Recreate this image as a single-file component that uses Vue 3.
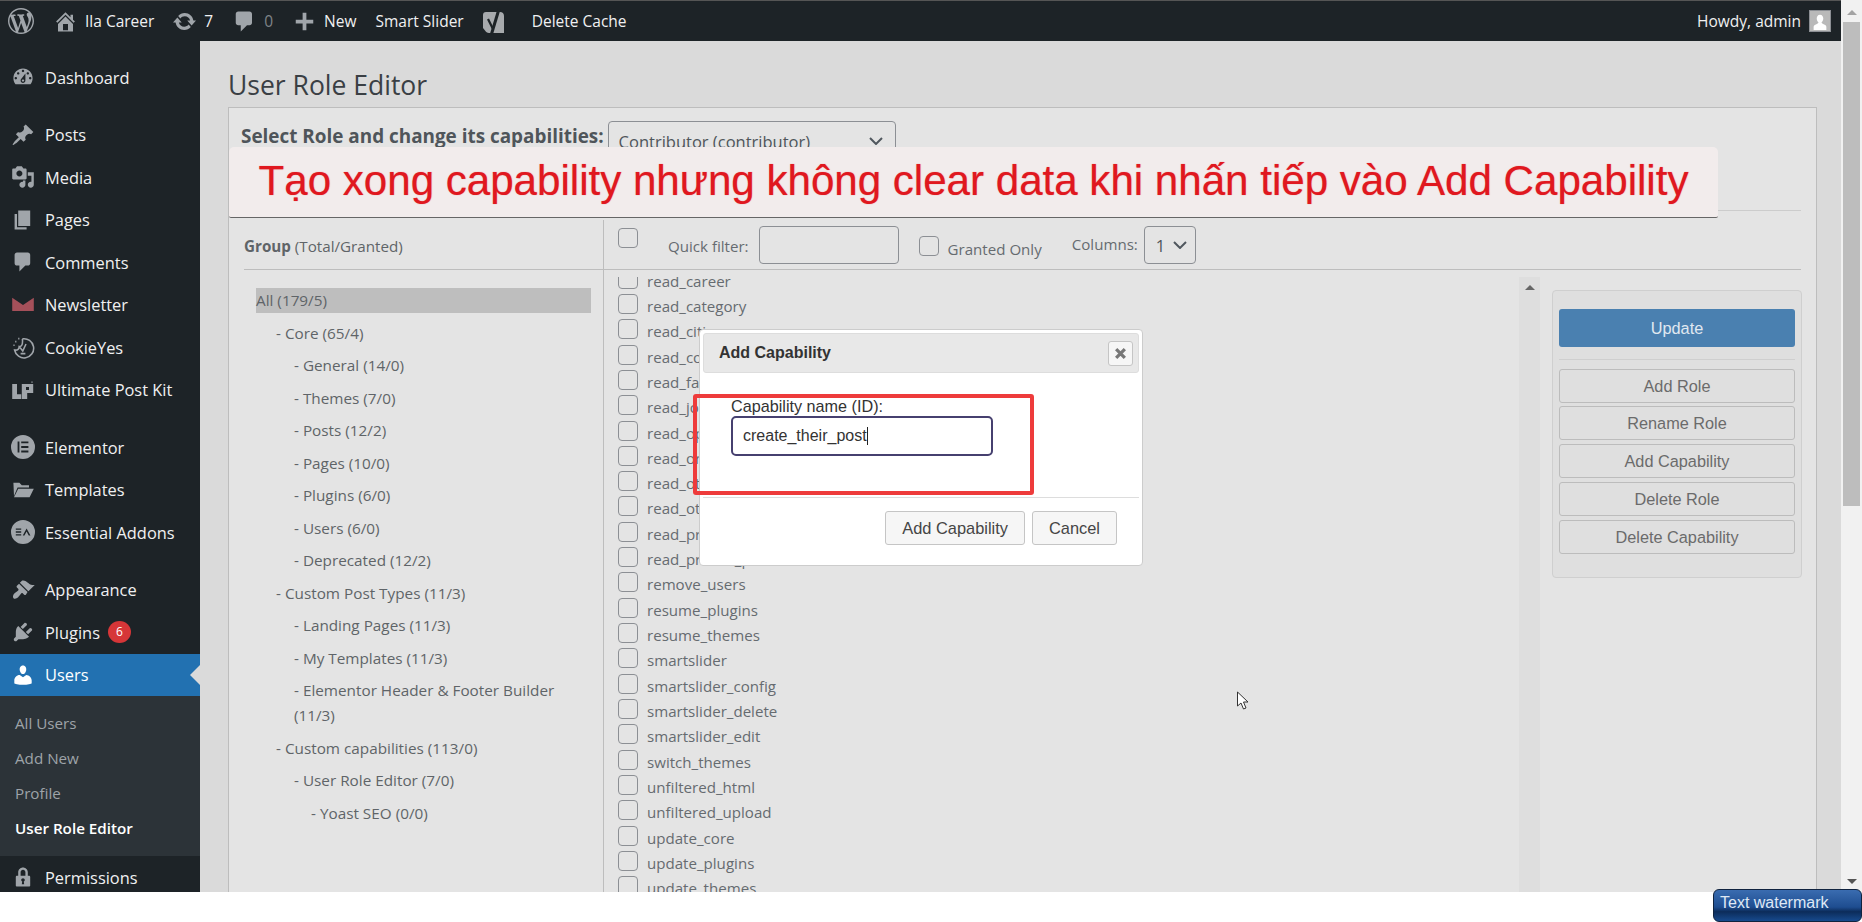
<script setup>
  const wpLogo = 'M20 10c0-5.51-4.49-10-10-10C4.48 0 0 4.49 0 10c0 5.52 4.48 10 10 10 5.51 0 10-4.48 10-10zM7.78 15.37L4.37 6.22c.55-.02 1.17-.08 1.17-.08.5-.06.44-1.13-.06-1.11 0 0-1.45.11-2.37.11-.18 0-.37 0-.58-.01C4.12 2.69 6.87 1.11 10 1.11c2.33 0 4.45.87 6.05 2.34-.68-.11-1.65.39-1.65 1.58 0 .74.45 1.36.9 2.1.35.61.55 1.36.55 2.46 0 1.49-1.4 5-1.4 5l-3.03-8.37c.54-.02.82-.17.82-.17.5-.05.44-1.25-.06-1.22 0 0-1.44.12-2.38.12-.87 0-2.33-.12-2.33-.12-.5-.03-.56 1.2-.06 1.22l.92.08 1.26 3.41zM17.41 10c.24-.64.74-1.87.43-4.25.7 1.29 1.05 2.71 1.05 4.25 0 3.29-1.73 6.24-4.4 7.78.97-2.59 1.94-5.2 2.92-7.78zM6.1 18.09C3.12 16.65 1.11 13.53 1.11 10c0-1.3.23-2.48.72-3.59C3.25 10.3 4.67 14.2 6.1 18.09zm4.03-6.63l2.58 6.98c-.86.29-1.76.45-2.71.45-.79 0-1.57-.11-2.29-.33.81-2.38 1.62-4.74 2.42-7.1z'
  const home = 'M16 8.5l1.53 1.53-1.06 1.06L10 4.62l-6.47 6.47-1.06-1.06L10 2.5l4 4v-2h2v4zm-6-2.46l6 5.99V18H4v-5.97zM12 17v-5H8v5h4z'
  const update = 'M10.2 3.28c3.53 0 6.43 2.61 6.92 6h2.08l-3.5 4-3.5-4h2.32c-.45-1.97-2.21-3.45-4.32-3.45-1.45 0-2.73.71-3.54 1.78L4.95 5.66C6.23 4.2 8.11 3.28 10.2 3.28zm-.4 13.44c-3.52 0-6.43-2.61-6.92-6H.8l3.5-4c1.17 1.33 2.33 2.67 3.5 4H5.48c.45 1.97 2.21 3.45 4.32 3.45 1.45 0 2.73-.71 3.54-1.78l1.71 1.95c-1.28 1.46-3.15 2.38-5.25 2.38z'
  const comment = 'M5 2h9c1.1 0 2 .9 2 2v7c0 1.1-.9 2-2 2h-2l-5 5v-5H5c-1.1 0-2-.9-2-2V4c0-1.1.9-2 2-2z'
  const plus = 'M17 8.5v3h-5.5V17h-3v-5.5H3v-3h5.5V3h3v5.500z'

  const topItems = [
    { icon: home, text: 'Ila Career', cls: 'w-home' },
    { icon: update, text: '7', cls: 'w-update' },
    { icon: comment, text: '0', cls: 'w-comment', dim: true },
    { icon: plus, text: 'New', cls: 'w-new' }
  ]

  // sidebar, sep = extra gap above the item
  const menu = [
    { name: 'Dashboard', icon: 'M3.76 16h12.48c1.1-1.37 1.76-3.11 1.76-5 0-4.42-3.58-8-8-8s-8 3.58-8 8c0 1.89.66 3.63 1.76 5zM10 4c.55 0 1 .45 1 1s-.45 1-1 1-1-.45-1-1 .45-1 1-1zM6 6c.55 0 1 .45 1 1s-.45 1-1 1-1-.45-1-1 .45-1 1-1zm8 0c.55 0 1 .45 1 1s-.45 1-1 1-1-.45-1-1 .45-1 1-1zm-5.37 5.55L12 7v6c0 1.1-.9 2-2 2s-2-.9-2-2c0-.57.24-1.08.63-1.45zM4 10c.55 0 1 .45 1 1s-.45 1-1 1-1-.45-1-1 .45-1 1-1zm12 0c.55 0 1 .45 1 1s-.45 1-1 1-1-.45-1-1 .45-1 1-1zm-5 3c0-.55-.45-1-1-1s-1 .45-1 1 .45 1 1 1 1-.45 1-1z' },
    { name: 'Posts', sep: true, icon: 'M10.44 3.02l1.82-1.82 6.36 6.35-1.83 1.82c-1.05-.68-2.48-.57-3.41.36l-.75.75c-.92.93-1.04 2.35-.35 3.41l-1.83 1.82-2.41-2.41-2.8 2.79c-.42.42-3.38 2.71-3.8 2.29s1.86-3.39 2.28-3.81l2.79-2.79L4.1 9.36l1.83-1.82c1.05.69 2.48.57 3.4-.36l.75-.75c.93-.92 1.05-2.35.36-3.41z' },
    { name: 'Media', icon: 'M13 11V4c0-.55-.45-1-1-1h-1.67L9 1H5L3.67 3H2c-.55 0-1 .45-1 1v7c0 .55.45 1 1 1h10c.55 0 1-.45 1-1zM7 4.5c1.38 0 2.5 1.12 2.5 2.5S8.38 9.5 7 9.5 4.5 8.38 4.5 7 5.62 4.5 7 4.5zM14 6h5v10.5c0 1.38-1.12 2.5-2.5 2.5S14 17.88 14 16.5s1.12-2.5 2.5-2.5c.17 0 .34.02.5.05V9h-3V6zm-4 8.05V13h2v3.5c0 1.38-1.12 2.5-2.5 2.5S7 17.88 7 16.5 8.12 14 9.5 14c.17 0 .34.02.5.05z' },
    { name: 'Pages', icon: 'M6 15V2h10v13H6zm-1 1h8v2H3V5h2v11z' },
    { name: 'Comments', icon: comment },
    { name: 'Newsletter', icon: 'M1 4l9 6 9-6v11H1z', color: '#a5505a' },
    { name: 'CookieYes', stroke: true, icon: 'M9.500 3.200A8 8 0 1 1 3 12.500c2.500.5 4-1 3.800-3 2 .3 3.200-1.300 2.700-6.300M7.500 10.500l2.300 2.800 2.700-5.800M8 15.500h4M3.500 5.500h1M2 8.500h1M6 3h1' },
    { name: 'Ultimate Post Kit', icon: 'M1 5h4v8.500h3.500v4H1zM9 5h9.500v7.500h-5v5H9zM12.500 7.500v2.500h2.500V7.500zM17 3h1v1h-1z' },
    { name: 'Elementor', sep: true, icon: 'M10 0a10 10 0 1 0 0 20A10 10 0 0 0 10 0zM7 14.500H5.500v-9H7zm7.500 0h-6V13h6zm0-3.700h-6V9.200h6zm0-3.900h-6V5.500h6z' },
    { name: 'Templates', icon: 'M2 4h5l2 2h6v2H5.500L2.500 15zM6 9h13l-3.500 7H2.500z' },
    { name: 'Essential Addons', icon: 'M10 0a10 10 0 1 0 0 20A10 10 0 0 0 10 0zM4 7h4.500v1.200H4zm0 2.400h4.500v1.200H4zm0 2.400h4.500V13H4zM13 7l3.200 6h-1.400L13 9.600 11.200 13H9.800z' },
    { name: 'Appearance', sep: true, icon: 'M14.48 11.06L7.41 3.99l1.5-1.5c.5-.56 2.3-.47 3.51.32 1.21.8 1.43 1.28 2.91 2.1 1.18.64 2.45 1.26 4.45.85zm-.71.71L6.7 4.7 4.93 6.47c-.39.39-.39 1.02 0 1.41l1.06 1.06c.39.39.39 1.03 0 1.42-.6.6-1.43 1.11-2.21 1.69-.35.26-.7.53-1.01.84-1.31 1.3-1.4 3.23-.7 3.9.7.7 2.6.6 3.9-.7.31-.31.58-.66.84-1.01.58-.78 1.09-1.61 1.69-2.21.39-.39 1.03-.39 1.42 0l1.06 1.06c.39.39 1.02.39 1.41 0z' },
    { name: 'Plugins', badge: 6, icon: 'M13.11 4.36L9.87 7.6 8 5.73l3.24-3.24c.35-.34 1.05-.2 1.56.32.52.51.66 1.21.31 1.55zm-8 1.77l.91-1.12 9.01 9.01-1.19.84c-.71.71-2.63 1.16-3.82 1.16H6.14L4.9 17.26c-.59.59-1.54.59-2.12 0-.59-.58-.59-1.53 0-2.12l1.24-1.24v-3.88c0-1.13.4-3.19 1.09-3.89zm7.26 3.97l3.24-3.24c.34-.35 1.04-.21 1.55.31.52.51.66 1.21.31 1.55l-3.24 3.25z' },
    { name: 'Users', active: true, icon: 'M10 9.25c-2.27 0-2.73-3.44-2.73-3.44C7 4.02 7.82 2 9.97 2c2.16 0 2.98 2.02 2.71 3.81 0 0-.41 3.44-2.68 3.44zm0 2.57L12.72 10c2.39 0 4.52 2.33 4.52 4.53v2.49s-3.65 1.13-7.24 1.13c-3.65 0-7.24-1.13-7.24-1.13v-2.49c0-2.25 1.94-4.48 4.47-4.48z' },
    { name: 'Permissions', icon: 'M14 9h1c.55 0 1 .45 1 1v7c0 .55-.45 1-1 1H5c-.55 0-1-.45-1-1v-7c0-.55.45-1 1-1h1V6c0-2.21 1.79-4 4-4s4 1.79 4 4v3zm-2 0V6c0-1.1-.9-2-2-2s-2 .9-2 2v3h4zm-1 7l-.36-2.15c.51-.24.86-.75.86-1.35 0-.83-.67-1.5-1.5-1.5s-1.5.67-1.5 1.5c0 .6.35 1.11.86 1.35L9 16h2z' }
  ]

  const submenu = [
    { name: 'All Users' },
    { name: 'Add New' },
    { name: 'Profile' },
    { name: 'User Role Editor', current: true }
  ]

  const groups = [
    { text: 'Core (65/4)', level: 1 },
    { text: 'General (14/0)', level: 2 },
    { text: 'Themes (7/0)', level: 2 },
    { text: 'Posts (12/2)', level: 2 },
    { text: 'Pages (10/0)', level: 2 },
    { text: 'Plugins (6/0)', level: 2 },
    { text: 'Users (6/0)', level: 2 },
    { text: 'Deprecated (12/2)', level: 2 },
    { text: 'Custom Post Types (11/3)', level: 1 },
    { text: 'Landing Pages (11/3)', level: 2 },
    { text: 'My Templates (11/3)', level: 2 },
    { text: 'Elementor Header & Footer Builder (11/3)', level: 2 },
    { text: 'Custom capabilities (113/0)', level: 1 },
    { text: 'User Role Editor (7/0)', level: 2 },
    { text: 'Yoast SEO (0/0)', level: 3 }
  ]

  const caps = [
    'read_career', 'read_category', 'read_cities', 'read_companies', 'read_faqs', 'read_jobs',
    'read_options', 'read_orders', 'read_others', 'read_others_posts', 'read_private_pages', 'read_private_posts',
    'remove_users', 'resume_plugins', 'resume_themes', 'smartslider', 'smartslider_config',
    'smartslider_delete', 'smartslider_edit', 'switch_themes', 'unfiltered_html', 'unfiltered_upload',
    'update_core', 'update_plugins', 'update_themes', 'upload_files'
  ]

  const actions = ['Add Role', 'Rename Role', 'Add Capability', 'Delete Role', 'Delete Capability']
</script>

<template>
  <div class="page">
    <div class="window">
      <div class="viewport">
        <!-- Admin bar -->
        <header class="adminbar">
          <svg class="bar-logo" viewBox="0 0 20 20"><path :d="wpLogo" /></svg>
          <div v-for="item in topItems" :key="item.cls" class="bar-item" :class="item.cls">
            <svg class="bar-icon" viewBox="0 0 20 20"><path :d="item.icon" /></svg>
            <span :class="{ 'bar-dim': item.dim }">{{ item.text }}</span>
          </div>
          <span class="bar-item w-slider">Smart Slider</span>
          <svg class="bar-yoast" viewBox="0 0 24 28">
            <path d="M4 5h14c2.500 0 4 1.500 4 4v17H7c-2 0-3-1-4-2.500L1 21V8c0-2 1-3 3-3z" />
            <path class="yoast-y" d="M6 12l5 10" />
            <path class="yoast-slash" d="M17 2L9.500 27" />
          </svg>
          <span class="bar-item w-cache">Delete Cache</span>
          <div class="bar-right">
            <span>Howdy, admin</span>
            <div class="avatar">
              <svg viewBox="0 0 22 22"><path d="M11 4c2.500 0 3.600 2 3.600 4.200 0 1.800-.9 3.500-1.900 4.300 0 1 .8 1.400 2.300 2 1.700.7 3 1.500 3 3V21H4v-3.500c0-1.500 1.300-2.300 3-3 1.500-.6 2.300-1 2.300-2-1-.8-1.900-2.500-1.900-4.300C7.400 6 8.500 4 11 4z" /></svg>
            </div>
          </div>
        </header>

        <div class="body-row">
          <!-- Sidebar -->
          <nav class="sidebar">
            <template v-for="item in menu" :key="item.name">
              <div class="menu-item" :class="{ 'menu-sep': item.sep, 'menu-active': item.active }">
                <svg
                  class="menu-icon"
                  :class="{ 'menu-icon-line': item.stroke }"
                  viewBox="0 0 20 20"
                  :style="item.color ? { fill: item.color } : null"
                >
                  <path :d="item.icon" />
                </svg>
                <span>{{ item.name }}</span>
                <span v-if="item.badge" class="menu-badge">{{ item.badge }}</span>
                <span v-if="item.active" class="menu-arrow"></span>
              </div>
              <div v-if="item.active" class="submenu">
                <div v-for="sub in submenu" :key="sub.name" class="sub-item" :class="{ 'sub-current': sub.current }">
                  {{ sub.name }}
                </div>
              </div>
            </template>
          </nav>

          <!-- Main content -->
          <main class="content">
            <h1 class="page-title">User Role Editor</h1>
            <section class="panel">
              <div class="role-row">
                <span class="role-label">Select Role and change its capabilities:</span>
                <div class="select role-select">
                  <span>Contributor (contributor)</span>
                  <svg class="chevron" viewBox="0 0 14 8"><path d="M1 1l6 6 6-6" /></svg>
                </div>
              </div>

              <div class="editor">
                <div class="groups">
                  <div class="groups-head"><b>Group</b> (Total/Granted)</div>
                  <div class="groups-list">
                    <div class="group-all">All (179/5)</div>
                    <div v-for="g in groups" :key="g.text" class="group-row" :class="'level-' + g.level">
                      - {{ g.text }}
                    </div>
                  </div>
                </div>

                <div class="caps">
                  <div class="caps-head">
                    <span class="check check-all"></span>
                    <span class="filter-label">Quick filter:</span>
                    <span class="filter-input"></span>
                    <span class="check check-granted"></span>
                    <span class="granted-label">Granted Only</span>
                    <span class="columns-label">Columns:</span>
                    <div class="select columns-select">
                      <span>1</span>
                      <svg class="chevron" viewBox="0 0 14 8"><path d="M1 1l6 6 6-6" /></svg>
                    </div>
                  </div>
                  <div class="caps-body">
                    <div class="caps-list">
                      <div class="caps-inner">
                        <div v-for="c in caps" :key="c" class="cap-row">
                          <span class="check"></span>
                          <span>{{ c }}</span>
                        </div>
                      </div>
                      <div class="caps-scroll"><span class="arrow-up"></span></div>
                    </div>
                    <aside class="actions">
                      <div class="btn-update">Update</div>
                      <div class="actions-sep"></div>
                      <div v-for="a in actions" :key="a" class="btn-action">{{ a }}</div>
                    </aside>
                  </div>
                </div>
              </div>
            </section>
          </main>
        </div>
      </div>

      <!-- Page scrollbar -->
      <div class="scrollbar">
        <span class="arrow-up arrow-light"></span>
        <div class="thumb"></div>
        <span class="arrow-down"></span>
      </div>
    </div>

    <!-- Annotation over the screenshot -->
    <div class="banner">Tạo xong capability nhưng không clear data khi nhấn tiếp vào Add Capability</div>

    <!-- Dialog -->
    <div class="dialog">
      <div class="dialog-title">
        <span>Add Capability</span>
        <div class="dialog-close">
          <svg viewBox="0 0 12 12"><path d="M2 2l8 8M10 2l-8 8" /></svg>
        </div>
      </div>
      <div class="dialog-body">
        <label class="dialog-label">Capability name (ID):</label>
        <div class="dialog-input"><span>create_their_post</span><i class="caret"></i></div>
      </div>
      <div class="dialog-foot">
        <div class="dialog-btn">Add Capability</div>
        <div class="dialog-btn">Cancel</div>
      </div>
      <div class="red-box"></div>
    </div>

    <div class="watermark">Text watermark</div>

    <svg class="cursor" viewBox="0 0 14 20"><path d="M1.500 1v14l3.500-3 2.500 6 2.500-1-2.500-6H12z" /></svg>
  </div>
</template>

<style>
  html, body {
    margin: 0;
    background: #fff;
    overflow: hidden;
  }
</style>

<style scoped>
  .page {
    position: relative;
    width: 1862px;
    height: 922px;
    overflow: hidden;
    background: #fff;
    font-family: "Open Sans", "Noto Sans", sans-serif;
    font-size: 15px;
  }

  .window {
    display: flex;
    height: 892px;
  }

  .viewport {
    flex: 1;
    min-width: 0;
    display: flex;
    flex-direction: column;
  }

  /* admin bar */
  .adminbar {
    flex: none;
    height: 40px;
    margin-top: 1px;
    box-shadow: 0 -1px 0 #555;
    background: #1d2327;
    color: #f0f0f1;
    display: flex;
    align-items: center;
    padding-left: 8px;
    padding-right: 10px;
    font-size: 15.500px;
  }

  .bar-logo {
    width: 26px;
    height: 26px;
    fill: #a0a5aa;
    margin-right: 19px;
  }

  .bar-item {
    display: flex;
    align-items: center;
    white-space: nowrap;
  }

  .bar-icon {
    width: 25px;
    height: 25px;
    fill: #a0a5aa;
    flex: none;
    margin-right: 7px;
  }

  .bar-dim {
    color: #7f8488;
  }

  .w-home { margin-right: 18px; }
  .w-update { margin-right: 19px; }
  .w-comment { margin-right: 19px; }
  .w-new { margin-right: 19px; }
  .w-slider { margin-right: 18px; }
  .w-cache { margin-left: 26px; }

  .bar-yoast {
    width: 24px;
    height: 28px;
    fill: #a7aaad;
  }

  .yoast-y {
    fill: none;
    stroke: #1d2327;
    stroke-width: 2.200;
  }

  .yoast-slash {
    fill: none;
    stroke: #1d2327;
    stroke-width: 3;
  }

  .bar-right {
    margin-left: auto;
    display: flex;
    align-items: center;
    gap: 8px;
  }

  .avatar {
    box-sizing: border-box;
    width: 22px;
    height: 22px;
    background: #b9b9b9;
    border: 1px solid #8c8f94;
  }

  .avatar svg {
    display: block;
    width: 100%;
    height: 100%;
    fill: #fff;
  }

  .body-row {
    flex: 1;
    min-height: 0;
    display: flex;
  }

  /* sidebar */
  .sidebar {
    flex: none;
    width: 200px;
    background: #1d2327;
    padding-top: 15px;
    overflow: hidden;
    color: #f0f0f1;
    font-size: 16.400px;
  }

  .menu-item {
    position: relative;
    height: 42.500px;
    display: flex;
    align-items: center;
    padding-left: 11px;
  }

  .menu-sep {
    margin-top: 15px;
  }

  .menu-active {
    background: #2271b1;
    color: #fff;
  }

  .menu-icon {
    width: 24px;
    height: 24px;
    fill: #a0a5aa;
    flex: none;
    margin-right: 10px;
  }

  .menu-icon-line {
    fill: none;
    stroke: #a0a5aa;
    stroke-width: 1.300;
  }

  .menu-active .menu-icon {
    fill: #fff;
  }

  .menu-badge {
    margin-left: 8px;
    width: 23px;
    height: 22px;
    border-radius: 50%;
    background: #d63638;
    color: #fff;
    font-size: 12px;
    line-height: 22px;
    text-align: center;
  }

  .menu-arrow {
    position: absolute;
    right: 0;
    top: 50%;
    margin-top: -10px;
    border: 10px solid transparent;
    border-right-color: #dadada;
    border-left-width: 0;
  }

  .submenu {
    background: #2c3338;
    padding: 10px 0;
    color: #9ea3a8;
    font-size: 15.200px;
  }

  .sub-item {
    height: 35px;
    line-height: 35px;
    padding-left: 15px;
  }

  .sub-current {
    color: #fff;
    font-weight: 600;
  }

  /* content */
  .content {
    flex: 1;
    min-width: 0;
    background: #dadada;
    padding-left: 28px;
    padding-right: 24px;
    overflow: hidden;
  }

  .page-title {
    margin: 0;
    height: 66px;
    line-height: 88px;
    font-size: 26.500px;
    font-weight: 400;
    color: #3a3f44;
  }

  .panel {
    border: 1px solid #bdbdbd;
    background: #e4e4e4;
    padding: 0 15px;
    height: 900px;
    box-sizing: border-box;
  }

  .role-row {
    height: 103px;
    box-sizing: border-box;
    border-bottom: 1px solid #cccccc;
    margin-left: -3px;
    display: flex;
    align-items: flex-start;
    padding-top: 13px;
    gap: 4px;
  }

  .role-label {
    font-size: 18.900px;
    font-weight: 700;
    line-height: 30px;
    color: #4f555a;
    white-space: nowrap;
  }

  .select {
    box-sizing: border-box;
    border: 1px solid #8c8f94;
    border-radius: 4px;
    display: flex;
    align-items: center;
    justify-content: space-between;
    color: #4f555a;
    font-size: 16.500px;
  }

  .role-select {
    width: 288px;
    height: 40px;
    padding: 0 12px 0 10px;
  }

  .columns-select {
    width: 52px;
    height: 38px;
    padding: 0 8px 0 11px;
  }

  .chevron {
    width: 14px;
    height: 8px;
    fill: none;
    stroke: #50575e;
    stroke-width: 2;
  }

  .editor {
    display: flex;
    margin-top: 9px;
    height: 770px;
  }

  .groups {
    flex: none;
    width: 360px;
    box-sizing: border-box;
    border-right: 1px solid #bdbdbd;
    color: #5f6468;
  }

  .groups-head {
    height: 50px;
    line-height: 52px;
    border-bottom: 1px solid #bdbdbd;
    box-sizing: border-box;
    font-size: 15.200px;
  }

  .groups-list {
    padding-top: 18px;
    padding-left: 12px;
    padding-right: 12px;
    font-size: 15.300px;
    line-height: 25px;
  }

  .group-all {
    background: #bebebe;
    margin-bottom: 7.500px;
  }

  .group-row {
    margin-bottom: 7.500px;
  }

  .level-1 { padding-left: 20px; }
  .level-2 { padding-left: 38px; }
  .level-3 { padding-left: 55px; }

  .caps {
    flex: 1;
    min-width: 0;
    color: #666b70;
    font-size: 15.100px;
  }

  .caps-head {
    height: 50px;
    box-sizing: border-box;
    border-bottom: 1px solid #bdbdbd;
    display: flex;
    align-items: flex-start;
    padding: 6px 0 0 14px;
  }

  .check {
    flex: none;
    box-sizing: border-box;
    display: inline-block;
    width: 20px;
    height: 20px;
    border: 1px solid #8c8f94;
    border-radius: 4px;
  }

  .check-all {
    margin-top: 2px;
  }

  .filter-label {
    margin-left: 30px;
    margin-top: 8px;
    line-height: 24px;
  }

  .filter-input {
    box-sizing: border-box;
    width: 140px;
    height: 38px;
    border: 1px solid #8c8f94;
    border-radius: 4px;
    margin-left: 10px;
  }

  .check-granted {
    margin-left: 20px;
    margin-top: 10px;
  }

  .granted-label {
    margin-left: 9px;
    margin-top: 11px;
    line-height: 24px;
  }

  .columns-label {
    margin-left: 30px;
    margin-top: 6px;
    line-height: 24px;
  }

  .columns-select {
    margin-left: 6px;
  }

  .caps-body {
    display: flex;
    padding-top: 7px;
  }

  .caps-list {
    flex: none;
    width: 936px;
    height: 620px;
    overflow: hidden;
    display: flex;
  }

  .caps-inner {
    flex: 1;
    margin-top: -11px;
    padding-left: 14px;
  }

  .cap-row {
    height: 25.320px;
    display: flex;
    align-items: center;
    gap: 9px;
  }

  .cap-row span:last-child {
    position: relative;
    top: 2px;
  }

  .caps-scroll {
    flex: none;
    width: 21px;
    background: #dedede;
    display: flex;
    justify-content: center;
    padding-top: 8px;
    box-sizing: border-box;
  }

  .arrow-up {
    width: 0;
    height: 0;
    border-left: 5px solid transparent;
    border-right: 5px solid transparent;
    border-bottom: 5px solid #666;
  }

  .arrow-light {
    border-bottom-color: #a3a3a3;
  }

  .arrow-down {
    width: 0;
    height: 0;
    border-left: 5px solid transparent;
    border-right: 5px solid transparent;
    border-top: 5px solid #555;
  }

  .actions {
    flex: none;
    margin-top: 13px;
    margin-left: 12px;
    width: 250px;
    height: 288px;
    box-sizing: border-box;
    background: #dfdfdf;
    border: 1px solid #cfcfcf;
    border-radius: 4px;
    padding: 18px 6px 0;
    font-family: "Liberation Sans", Arial, sans-serif;
    font-size: 16.300px;
    display: flex;
    flex-direction: column;
    gap: 3.750px;
  }

  .btn-update {
    height: 38px;
    line-height: 38px;
    text-align: center;
    background: #4a80b0;
    border-radius: 3px;
    color: #e0e8f0;
  }

  .actions-sep {
    height: 1px;
    background: #cfcfcf;
    margin: 8px 0 5px;
  }

  .btn-action {
    height: 34px;
    line-height: 32px;
    box-sizing: border-box;
    text-align: center;
    border: 1px solid #bcbcbc;
    border-radius: 3px;
    color: #6b6b6b;
  }

  /* page scrollbar */
  .scrollbar {
    flex: none;
    width: 21px;
    background: #f1f1f1;
    display: flex;
    flex-direction: column;
    align-items: center;
    padding-top: 10px;
    padding-bottom: 8px;
    box-sizing: border-box;
  }

  .thumb {
    width: 17px;
    height: 484px;
    margin-top: 7px;
    background: #bdbdbd;
    margin-bottom: auto;
  }

  /* overlays */
  .banner {
    position: absolute;
    left: 229px;
    top: 147px;
    width: 1489px;
    height: 71px;
    box-sizing: border-box;
    background: #f2ecec;
    border-bottom: 1px solid #666;
    border-radius: 5px 5px 2px 2px;
    color: #e0181f;
    font-family: "Liberation Sans", Arial, sans-serif;
    font-size: 42.100px;
    line-height: 68px;
    text-align: center;
    white-space: nowrap;
    text-shadow: 0 0 1px rgba(224, 24, 31, 0.6);
  }

  .dialog {
    position: absolute;
    left: 699px;
    top: 329px;
    width: 444px;
    height: 237px;
    box-sizing: border-box;
    background: #fff;
    border: 1px solid #ccc;
    border-radius: 4px;
    padding: 3px;
    font-family: "Liberation Sans", Arial, sans-serif;
    font-size: 16px;
    color: #333;
  }

  .dialog-title {
    height: 40px;
    background: #e8e8e8;
    border: 1px solid #ddd;
    border-radius: 3px;
    box-sizing: border-box;
    display: flex;
    align-items: center;
    justify-content: space-between;
    padding: 0 5px 0 15px;
    font-weight: 700;
  }

  .dialog-close {
    box-sizing: border-box;
    width: 25px;
    height: 25px;
    background: #f6f6f6;
    border: 1px solid #c5c5c5;
    border-radius: 3px;
    display: flex;
    align-items: center;
    justify-content: center;
  }

  .dialog-close svg {
    width: 13px;
    height: 13px;
    fill: none;
    stroke: #777;
    stroke-width: 3;
  }

  .dialog-body {
    height: 125px;
    box-sizing: border-box;
    border-bottom: 1px solid #ddd;
    padding: 23px 0 0 28px;
  }

  .dialog-label {
    display: block;
    line-height: 20px;
    font-size: 16.200px;
  }

  .dialog-input {
    box-sizing: border-box;
    width: 262px;
    height: 40px;
    border: 2px solid #46406f;
    border-radius: 5px;
    display: flex;
    align-items: center;
    padding-left: 10px;
  }

  .caret {
    width: 1px;
    height: 18px;
    background: #222;
  }

  .dialog-foot {
    display: flex;
    justify-content: flex-end;
    gap: 7px;
    padding: 13px 22px 0 0;
  }

  .dialog-btn {
    box-sizing: border-box;
    height: 34px;
    line-height: 32px;
    padding: 0 16px;
    background: #f6f6f6;
    border: 1px solid #c5c5c5;
    border-radius: 3px;
    color: #454545;
    font-size: 16.400px;
  }

  .red-box {
    position: absolute;
    left: -7px;
    top: 64px;
    width: 341px;
    height: 101px;
    box-sizing: border-box;
    border: 4px solid #ee3b3b;
    border-radius: 3px;
  }

  .watermark {
    position: absolute;
    left: 1713px;
    top: 889px;
    width: 149px;
    height: 33px;
    box-sizing: border-box;
    border: 1px solid #10233f;
    border-radius: 6px;
    padding-left: 6px;
    background: linear-gradient(#3a6cb0, #1e4d90 55%, #0c2c5a 70%, #174a8d);
    color: #dfe8f5;
    font-family: "Liberation Sans", Arial, sans-serif;
    font-size: 16px;
    line-height: 25px;
  }

  .cursor {
    position: absolute;
    left: 1236px;
    top: 691px;
    width: 14px;
    height: 20px;
    fill: #fff;
    stroke: #333;
    stroke-width: 1;
  }
</style>
